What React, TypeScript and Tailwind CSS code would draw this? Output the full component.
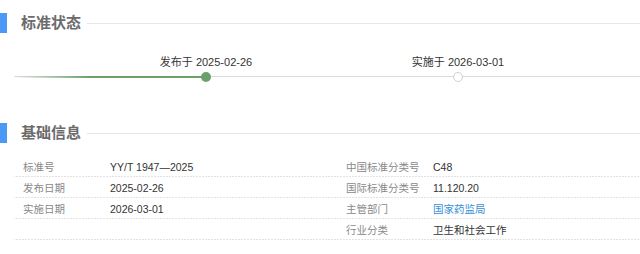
import React from 'react';

const font = { fontFamily: '"Liberation Sans", "Noto Sans CJK SC", sans-serif' };

function SectionTitle({ title }: { title: string }) {
  return (
    <div className="flex items-center h-[20px]">
      <div className="w-[7px] h-[20px] bg-[#4a9af5]" />
      <h2 className="ml-[14px] text-[15px] leading-[20px] font-bold text-[#6b6b6b]">{title}</h2>
      <div className="flex-1 ml-[6px] h-px bg-[#e6e6e6]" />
    </div>
  );
}

const rows = [
  { l1: '标准号', v1: 'YY/T 1947—2025', l2: '中国标准分类号', v2: 'C48' },
  { l1: '发布日期', v1: '2025-02-26', l2: '国际标准分类号', v2: '11.120.20' },
  { l1: '实施日期', v1: '2026-03-01', l2: '主管部门', v2: '国家药监局', link: true },
  { l1: '', v1: '', l2: '行业分类', v2: '卫生和社会工作' },
];

export default function App() {
  return (
    <div className="w-[640px] h-[254px] overflow-hidden bg-white" style={font}>
      <div className="pt-[13px]">
        <SectionTitle title="标准状态" />
      </div>

      {/* timeline */}
      <div className="relative mt-[21px] h-[35px]">
        <div className="absolute left-[14px] right-0 top-[22px] h-px bg-[#dcdcdc]" />
        <div className="absolute left-[14px] w-[192px] top-[22px] h-[2px] bg-[linear-gradient(to_right,rgba(106,160,106,0),#6aa06a_40%,#6aa06a)]" />
        <div className="relative flex pl-[80px]">
          <div className="w-[252px] flex flex-col items-center">
            <span className="text-[11px] leading-[16px] text-[#333]">发布于 2025-02-26</span>
            <span className="mt-[2px] w-[10px] h-[10px] rounded-full bg-[#6aa06a]" />
          </div>
          <div className="w-[252px] flex flex-col items-center">
            <span className="text-[11px] leading-[16px] text-[#333]">实施于 2026-03-01</span>
            <span className="mt-[2px] w-[10px] h-[10px] rounded-full bg-white border-[1.5px] border-[#d0d0d0]" />
          </div>
        </div>
      </div>

      <div className="mt-[34px]">
        <SectionTitle title="基础信息" />
      </div>

      <div className="mt-[13px] ml-[14px]">
        {rows.map((r, i) => (
          <div
            key={i}
            className="grid grid-cols-[96px_236px_87px_1fr] h-[21px] items-center text-[10.5px] leading-[20px] bg-[linear-gradient(to_right,#c4c4c4_1px,transparent_1px)] bg-[length:3px_1px] bg-repeat-x bg-bottom"
          >
            <span className="pl-[9px] text-[#888]">{r.l1}</span>
            <span className="text-[#333]">{r.v1}</span>
            <span className="text-[#888]">{r.l2}</span>
            <span className={r.link ? 'text-[#3a8fd8]' : 'text-[#333]'}>{r.v2}</span>
          </div>
        ))}
      </div>
    </div>
  );
}
